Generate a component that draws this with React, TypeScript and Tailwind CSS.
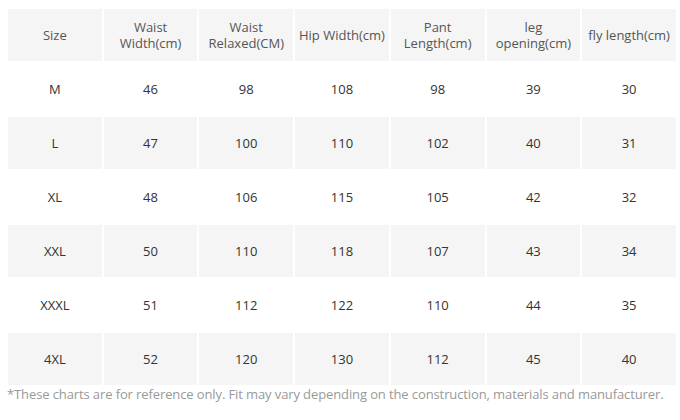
import React from "react";

const headers = [
  ["Size"],
  ["Waist", "Width(cm)"],
  ["Waist", "Relaxed(CM)"],
  ["Hip Width(cm)"],
  ["Pant", "Length(cm)"],
  ["leg", "opening(cm)"],
  ["fly length(cm)"],
];

const rows = [
  ["M", "46", "98", "108", "98", "39", "30"],
  ["L", "47", "100", "110", "102", "40", "31"],
  ["XL", "48", "106", "115", "105", "42", "32"],
  ["XXL", "50", "110", "118", "107", "43", "34"],
  ["XXXL", "51", "112", "122", "110", "44", "35"],
  ["4XL", "52", "120", "130", "112", "45", "40"],
];

export default function App() {
  return (
    <div
      className="w-[680px] h-[420px] bg-white overflow-hidden"
      style={{ fontFamily: '"Open Sans", "Liberation Sans", sans-serif' }}
    >
      <table className="table-fixed border-separate border-spacing-[2px] w-[672px] ml-[6px] mt-[7px]">
        <thead>
          <tr>
            {headers.map((h, i) => (
              <th
                key={i}
                className="h-[52px] bg-[#f5f5f5] text-[13px] leading-[16px] font-normal text-[#555] text-center align-middle p-0"
              >
                {h.map((line, j) => (
                  <div key={j}>{line}</div>
                ))}
              </th>
            ))}
          </tr>
        </thead>
        <tbody>
          {rows.map((r, i) => (
            <tr key={i}>
              {r.map((c, j) => (
                <td
                  key={j}
                  className={
                    "h-[52px] text-[13px] leading-[16px] text-[#333] text-center align-middle p-0 " +
                    (i % 2 === 1 ? "bg-[#f5f5f5]" : "bg-white")
                  }
                >
                  {c}
                </td>
              ))}
            </tr>
          ))}
        </tbody>
      </table>
      <div className="ml-[7px] -mt-[1px] text-[13px] leading-[16px] tracking-[-0.11px] text-[#999] whitespace-nowrap">
        *These charts are for reference only. Fit may vary depending on the construction, materials and manufacturer.
      </div>
    </div>
  );
}
